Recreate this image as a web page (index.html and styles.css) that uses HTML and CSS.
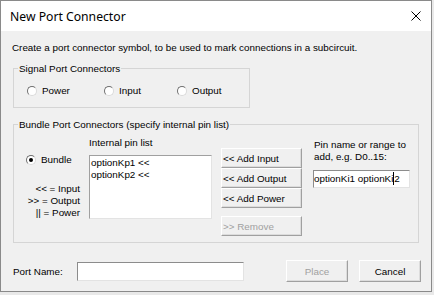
FILE: index.html
```html
<!DOCTYPE html>
<html>
<head>
    <meta charset="UTF-8">
    <title>New Port Connector</title>
    <link rel="stylesheet" href="styles.css">
</head>
<body>
    <div class="window">
        <div class="titlebar">
            <span class="title">New Port Connector</span>
            <svg class="close" width="10" height="10" viewBox="0 0 10 10">
                <path d="M0.5 0.5 L9.5 9.5 M9.5 0.5 L0.5 9.5" stroke="#000" stroke-width="1" fill="none"/>
            </svg>
        </div>
        <div class="dialog">
            <p class="intro">Create a port connector symbol, to be used to mark connections in a subcircuit.</p>

            <fieldset class="group signal">
                <legend>Signal Port Connectors</legend>
                <div class="radio-row">
                    <label class="radio power"><span class="dot"></span>Power</label>
                    <label class="radio input"><span class="dot"></span>Input</label>
                    <label class="radio"><span class="dot"></span>Output</label>
                </div>
            </fieldset>

            <fieldset class="group bundle">
                <legend>Bundle Port Connectors (specify internal pin list)</legend>
                <div class="bundle-cols">
                    <div class="col-kind">
                        <label class="radio"><span class="dot checked"></span>Bundle</label>
                        <div class="key">&lt;&lt; = Input<br>&gt;&gt; = Output<br>|| = Power</div>
                    </div>
                    <div class="col-list">
                        <div class="caption">Internal pin list</div>
                        <div class="listbox">
                            <div>optionKp1 &lt;&lt;</div>
                            <div>optionKp2 &lt;&lt;</div>
                        </div>
                    </div>
                    <div class="col-buttons">
                        <button class="btn">&lt;&lt; Add Input</button>
                        <button class="btn">&lt;&lt; Add Output</button>
                        <button class="btn">&lt;&lt; Add Power</button>
                        <button class="btn remove" disabled>&gt;&gt; Remove</button>
                    </div>
                    <div class="col-pin">
                        <div class="caption">Pin name or range to<br>add, e.g. D0..15:</div>
                        <div class="textbox pin">optionKi1 optionKi<span class="caret"></span>2</div>
                    </div>
                </div>
            </fieldset>

            <div class="footer">
                <span class="port-label">Port Name:</span>
                <div class="textbox port"></div>
                <button class="btn action place" disabled>Place</button>
                <button class="btn action cancel">Cancel</button>
            </div>
        </div>
    </div>
</body>
</html>
```
FILE: styles.css
```css
body {
    margin: 0;
    background: #e9e9e9;
    font-family: "Liberation Sans", Arial, sans-serif;
    font-size: 9.86px;
    color: #000;
}

.window {
    width: 430px;
    height: 290px;
    border: 1px solid #8a8a8a;
    background: #f0f0f0;
    display: flex;
    flex-direction: column;
}

.titlebar {
    height: 30px;
    background: #fff;
    display: flex;
    align-items: center;
    justify-content: space-between;
    padding: 0 10px 0 9px;
}

.title {
    font-family: "Noto Sans", sans-serif;
    font-size: 12.2px;
}

.dialog {
    flex: 1;
    padding: 10px 10px 0 11px;
}

.intro {
    margin: 0;
    line-height: 13px;
}

.group {
    margin: 8px 0 0 1px;
    padding: 0 0 0 4px;
    border: 1px solid #d5d5d5;
    min-width: 0;
    box-sizing: border-box;
}

.group legend {
    padding: 0 1px;
    line-height: 13px;
}

.signal {
    width: 237px;
    padding-bottom: 10px;
}

.radio-row {
    display: flex;
    margin: 9px 0 0 9px;
    line-height: 13px;
}

.radio {
    display: flex;
    align-items: center;
    line-height: 13px;
}

.radio.power { width: 77px; }
.radio.input { width: 73px; }

.dot {
    width: 10px;
    height: 10px;
    box-sizing: border-box;
    border-radius: 50%;
    border: 1px solid;
    border-color: #6e6e6e #dadada #dadada #6e6e6e;
    background: #fff;
    margin-right: 5px;
    display: flex;
    align-items: center;
    justify-content: center;
}

.dot.checked::after {
    content: "";
    width: 4px;
    height: 4px;
    border-radius: 50%;
    background: #000;
}

.bundle {
    width: 406px;
    margin-top: 10px;
    padding-bottom: 6px;
}

.bundle-cols {
    display: flex;
    align-items: flex-start;
}

.col-kind {
    width: 62px;
}

.col-kind .radio {
    margin: 22px 0 0 8px;
}

.key {
    text-align: right;
    line-height: 12px;
    margin-top: 17px;
}

.caption {
    line-height: 12px;
}

.col-list {
    width: 123px;
    margin-left: 9px;
}

.col-list .caption {
    margin-top: 6px;
}

.listbox {
    margin-top: 6px;
    height: 64px;
    box-sizing: border-box;
    background: #fff;
    border: 1px solid;
    border-color: #a0a0a0 #e3e3e3 #e3e3e3 #a0a0a0;
    padding: 1px 1px;
    line-height: 12px;
}

.col-buttons {
    width: 81px;
    margin: 17px 0 0 9px;
    display: flex;
    flex-direction: column;
}

.btn {
    font: inherit;
    color: #000;
    height: 20px;
    box-sizing: border-box;
    margin: 0;
    padding: 0 0 0 1px;
    text-align: left;
    background: #f0f0f0;
    border: 1px solid;
    border-color: #fff #a0a0a0 #a0a0a0 #fff;
    box-shadow: inset -1px -1px 0 #dcdcdc;
}

.btn:disabled {
    color: #a0a0a0;
}

.btn.remove {
    margin-top: 8px;
}

.col-pin {
    width: 97px;
    margin-left: 11px;
}

.col-pin .caption {
    margin-top: 8px;
    padding-left: 1px;
}

.textbox {
    box-sizing: border-box;
    background: #fff;
    border: 1px solid;
    border-color: #8c8c8c #e3e3e3 #e3e3e3 #8c8c8c;
}

.textbox.pin {
    margin-top: 7px;
    height: 18px;
    line-height: 16px;
    white-space: nowrap;
    overflow: hidden;
}

.caret {
    display: inline-block;
    width: 1px;
    height: 13px;
    background: #000;
    vertical-align: -3px;
}

.footer {
    display: flex;
    align-items: center;
    height: 22px;
    margin: 17px 0 0 1px;
}

.port-label {
    width: 64px;
}

.textbox.port {
    width: 167px;
    height: 19px;
}

.btn.action {
    width: 62px;
    height: 22px;
    padding: 0;
    text-align: center;
}

.place {
    margin-left: auto;
}

.cancel {
    margin-left: 11px;
}
```
